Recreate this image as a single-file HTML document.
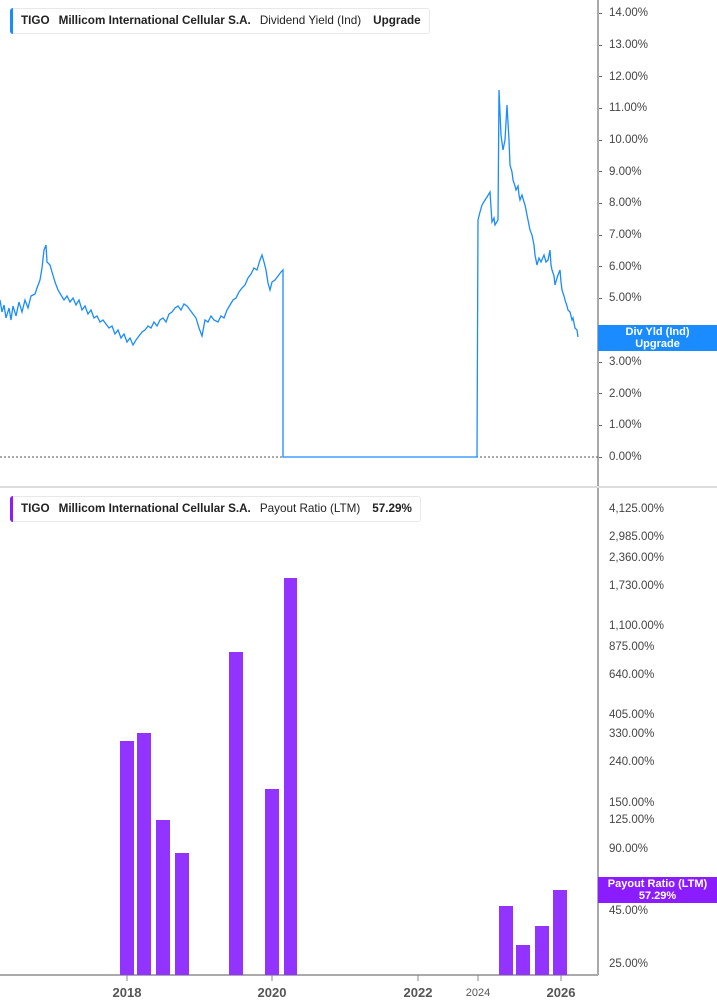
<!DOCTYPE html>
<html><head><meta charset="utf-8"><style>
body{margin:0;width:717px;height:1005px;background:#fff;font-family:"Liberation Sans",sans-serif;overflow:hidden;position:relative}
.lg{position:absolute;left:10px;height:24px;border:1px solid #e8e8e8;border-radius:3px;background:#fff;font-size:11.7px;line-height:24px;padding-left:10px;white-space:nowrap;color:#222}
.lg:before{content:"";position:absolute;left:-1px;top:-1px;bottom:-1px;width:3px;border-radius:3px 0 0 3px;background:var(--c)}
.lg b{font-weight:bold;margin-right:9px}
.lg span{margin-right:12px}
.ax{position:absolute;left:609px;font-size:11.5px;color:#444;margin-top:1px}
.tag{position:absolute;left:598px;width:119px;color:#fff;font-size:11px;font-weight:bold;text-align:center;line-height:12px}
</style></head><body>
<svg width="717" height="1005" style="position:absolute;left:0;top:0">
<line x1="598" y1="0" x2="598" y2="975" stroke="#aaa" stroke-width="2"/>
<line x1="0" y1="487" x2="717" y2="487" stroke="#ddd" stroke-width="2"/>
<line x1="0" y1="457" x2="598" y2="457" stroke="#555" stroke-dasharray="2,2"/>
<line x1="0" y1="975" x2="598" y2="975" stroke="#aaa" stroke-width="2"/>
<polyline fill="none" stroke="#1a8cff" stroke-width="1.3" points="0,300 2,312 4,305 6,318 9,308 11,320 13,306 16,316 19,302 22,312 25,300 28,308 31,296 35,294 37,288 40,280 42,268 44,250 46,245 47,262 50,265 52,272 55,282 58,290 61,295 64,300 67,296 70,302 73,298 76,305 79,300 82,310 85,306 88,314 91,310 94,318 97,316 100,322 103,320 106,324 109,328 112,326 115,334 118,330 121,338 124,334 127,342 130,338 133,345 136,340 139,336 142,332 145,330 148,326 151,328 154,322 157,326 160,320 163,318 166,322 169,314 172,312 175,308 178,306 181,310 184,304 187,306 190,310 193,314 196,318 199,328 202,336 205,320 208,322 211,316 214,320 218,322 221,316 224,318 227,310 230,305 233,300 236,298 239,292 242,288 245,285 248,278 251,274 254,268 257,270 260,260 262,255 264,262 266,270 268,283 270,290 272,282 275,280 278,276 281,272 283,270 283,457 477,457 478,220 480,212 482,205 485,200 487,197 490,192 492,222 494,218 495,225 498,220 499,90 501,135 503,150 505,140 507,105 509,140 510,165 512,172 513,180 515,186 516,190 518,186 519,195 520,200 522,195 524,202 525,205 527,215 528,220 530,230 532,235 534,245 535,255 537,265 539,258 541,262 544,255 546,262 548,260 550,250 551,265 552,270 554,276 555,285 557,278 558,275 560,270 561,282 562,290 564,296 565,300 567,306 568,310 570,312 572,320 573,318 575,328 577,330 578,337"/>
<g fill="#9333ff">
<rect x="120" y="741" width="14" height="234"/><rect x="137" y="733" width="14" height="242"/><rect x="156" y="820" width="14" height="155"/><rect x="175" y="853" width="14" height="122"/><rect x="229" y="652" width="14" height="323"/><rect x="265" y="789" width="14" height="186"/><rect x="284" y="578" width="13" height="397"/><rect x="499" y="906" width="14" height="69"/><rect x="516" y="945" width="14" height="30"/><rect x="535" y="926" width="14" height="49"/><rect x="553" y="890" width="14" height="85"/>
</g>
<g stroke="#888"><line x1="127" y1="975" x2="127" y2="981"/><line x1="272" y1="975" x2="272" y2="981"/><line x1="418" y1="975" x2="418" y2="981"/><line x1="478" y1="975" x2="478" y2="981"/><line x1="561" y1="975" x2="561" y2="981"/></g>
<g fill="#666">
<rect x="599" y="13" width="3" height="1"/><rect x="599" y="45" width="3" height="1"/><rect x="599" y="76" width="3" height="1"/><rect x="599" y="108" width="3" height="1"/><rect x="599" y="140" width="3" height="1"/><rect x="599" y="171" width="3" height="1"/><rect x="599" y="203" width="3" height="1"/><rect x="599" y="235" width="3" height="1"/><rect x="599" y="266" width="3" height="1"/><rect x="599" y="298" width="3" height="1"/><rect x="599" y="362" width="3" height="1"/><rect x="599" y="393" width="3" height="1"/><rect x="599" y="425" width="3" height="1"/><rect x="599" y="457" width="3" height="1"/>
</g>
<g font-family="Liberation Sans" fill="#555" font-size="13" font-weight="bold" text-anchor="middle">
<text x="127" y="997">2018</text><text x="272" y="997">2020</text><text x="418" y="997">2022</text><text x="561" y="997">2026</text>
<text x="478" y="996" font-size="11" font-weight="normal">2024</text></g>
</svg>
<div class="lg" style="top:8px;--c:#1a8cff"><b>TIGO</b><b>Millicom International Cellular S.A.</b><span>Dividend Yield (Ind)</span><b style="margin-right:8px">Upgrade</b></div>
<div class="lg" style="top:496px;--c:#8a1cff"><b>TIGO</b><b>Millicom International Cellular S.A.</b><span>Payout Ratio (LTM)</span><b style="margin-right:8px">57.29%</b></div>
<div class="ax" style="top:6px">14.00%</div><div class="ax" style="top:38px">13.00%</div><div class="ax" style="top:70px">12.00%</div><div class="ax" style="top:101px">11.00%</div><div class="ax" style="top:133px">10.00%</div><div class="ax" style="top:165px">9.00%</div><div class="ax" style="top:196px">8.00%</div><div class="ax" style="top:228px">7.00%</div><div class="ax" style="top:260px">6.00%</div><div class="ax" style="top:291px">5.00%</div><div class="ax" style="top:355px">3.00%</div><div class="ax" style="top:387px">2.00%</div><div class="ax" style="top:418px">1.00%</div><div class="ax" style="top:450px">0.00%</div>
<div class="ax" style="top:502px">4,125.00%</div><div class="ax" style="top:530px">2,985.00%</div><div class="ax" style="top:551px">2,360.00%</div><div class="ax" style="top:579px">1,730.00%</div><div class="ax" style="top:619px">1,100.00%</div><div class="ax" style="top:640px">875.00%</div><div class="ax" style="top:668px">640.00%</div><div class="ax" style="top:708px">405.00%</div><div class="ax" style="top:727px">330.00%</div><div class="ax" style="top:755px">240.00%</div><div class="ax" style="top:796px">150.00%</div><div class="ax" style="top:813px">125.00%</div><div class="ax" style="top:842px">90.00%</div><div class="ax" style="top:904px">45.00%</div><div class="ax" style="top:957px">25.00%</div>
<div class="tag" style="top:325px;height:25px;padding-top:1px;background:#1a8cff">Div Yld (Ind)<br>Upgrade</div>
<div class="tag" style="top:877px;height:25px;padding-top:1px;background:#8a1cff">Payout Ratio (LTM)<br>57.29%</div>
</body></html>
